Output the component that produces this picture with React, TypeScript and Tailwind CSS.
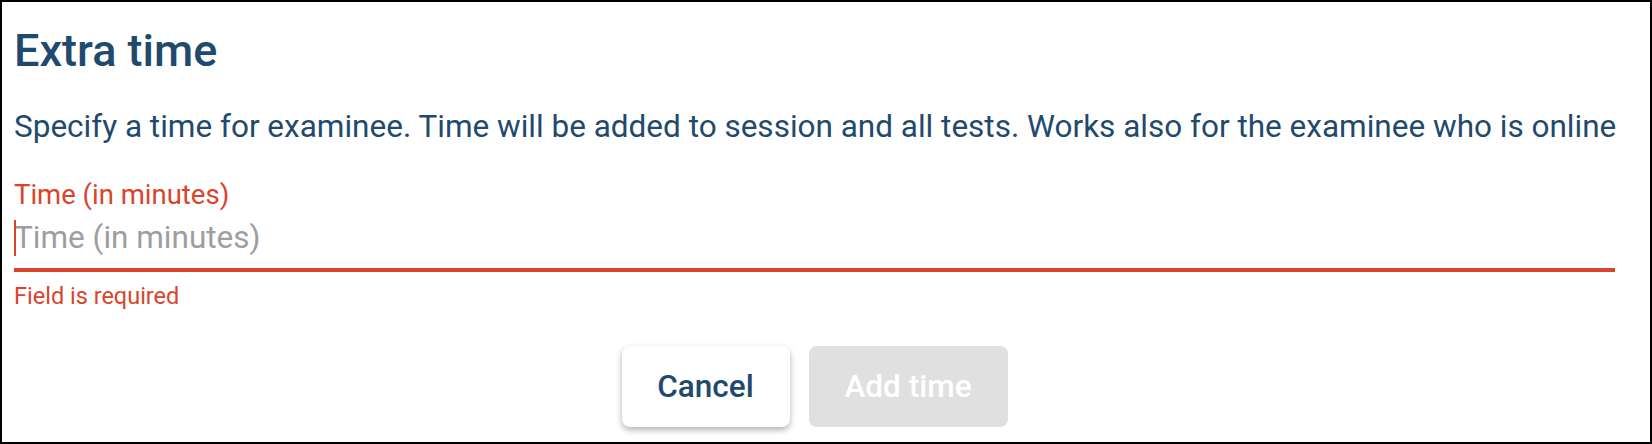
import React from "react";

export default function App() {
  return (
    <div className="w-[1652px] h-[444px] border-2 border-black bg-white box-border overflow-hidden" style={{ fontFamily: "Roboto, 'Liberation Sans', sans-serif" }}>
      <div className="pl-3 pr-[35px] pt-[23px]">
        <h1 className="text-[45px] leading-[52px] font-medium text-[#1f4a6e]">Extra time</h1>
        <p className="mt-[31px] text-[31.5px] leading-[38px] text-[#1f4a6e] whitespace-nowrap">
          Specify a time for examinee. Time will be added to session and all tests. Works also for the examinee who is online
        </p>
        <div className="mt-[33px]">
          <div className="text-[27.5px] leading-[32px] text-[#d9452b]">Time (in minutes)</div>
          <div className="relative mt-[8px] h-[38px]">
            <span className="absolute left-0 top-[1px] w-[2px] h-[36px] bg-[#d9452b]" />
            <span className="block text-[31.5px] leading-[38px] text-[#9e9e9e]">Time (in minutes)</span>
          </div>
          <div className="mt-[11px] h-[4px] bg-[#d9452b]" />
          <div className="mt-[10px] text-[23.5px] leading-[28px] text-[#d9452b]">Field is required</div>
        </div>
        <div className="mt-[36px] flex justify-center gap-[19px]">
          <button className="w-[168px] h-[81px] rounded-[8px] bg-white shadow-[0_3px_6px_rgba(0,0,0,0.3)] text-[31.5px] font-medium text-[#1f4a6e]">Cancel</button>
          <button className="w-[199px] h-[81px] rounded-[8px] bg-[#e0e0e0] text-[31.5px] font-medium text-white">Add time</button>
        </div>
      </div>
    </div>
  );
}
